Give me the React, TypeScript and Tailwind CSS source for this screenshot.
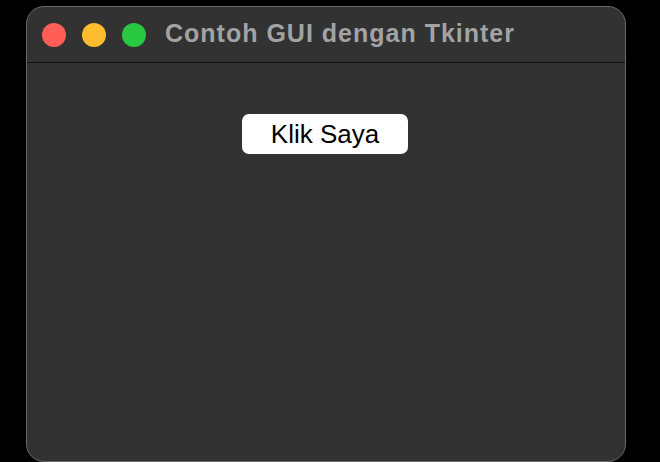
export default function App() {
  return (
    <div className="w-[660px] h-[462px] bg-black overflow-hidden pt-[6px] pl-[26px]" style={{ fontFamily: '"Liberation Sans", Arial, sans-serif' }}>
      <div className="w-[600px] h-[456px] bg-[#323232] border border-[#6a6a6a] rounded-[18px] flex flex-col overflow-hidden">
        <div className="h-[56px] flex items-center border-b border-[#111] pl-[15px] shrink-0">
          <div className="flex gap-[16px]">
            <div className="w-[24px] h-[24px] rounded-full bg-[#ff5f57]" />
            <div className="w-[24px] h-[24px] rounded-full bg-[#febc2e]" />
            <div className="w-[24px] h-[24px] rounded-full bg-[#28c840]" />
          </div>
          <div className="ml-[19px] mb-[2px] text-[25px] tracking-[1px] font-bold text-[#a3a3a3] leading-none">Contoh GUI dengan Tkinter</div>
        </div>
        <div className="flex justify-center pt-[51px] pr-[2px]">
          <div className="w-[166px] h-[40px] bg-white rounded-[7px] flex items-center justify-center text-[26px] text-black leading-none">Klik Saya</div>
        </div>
      </div>
    </div>
  );
}
